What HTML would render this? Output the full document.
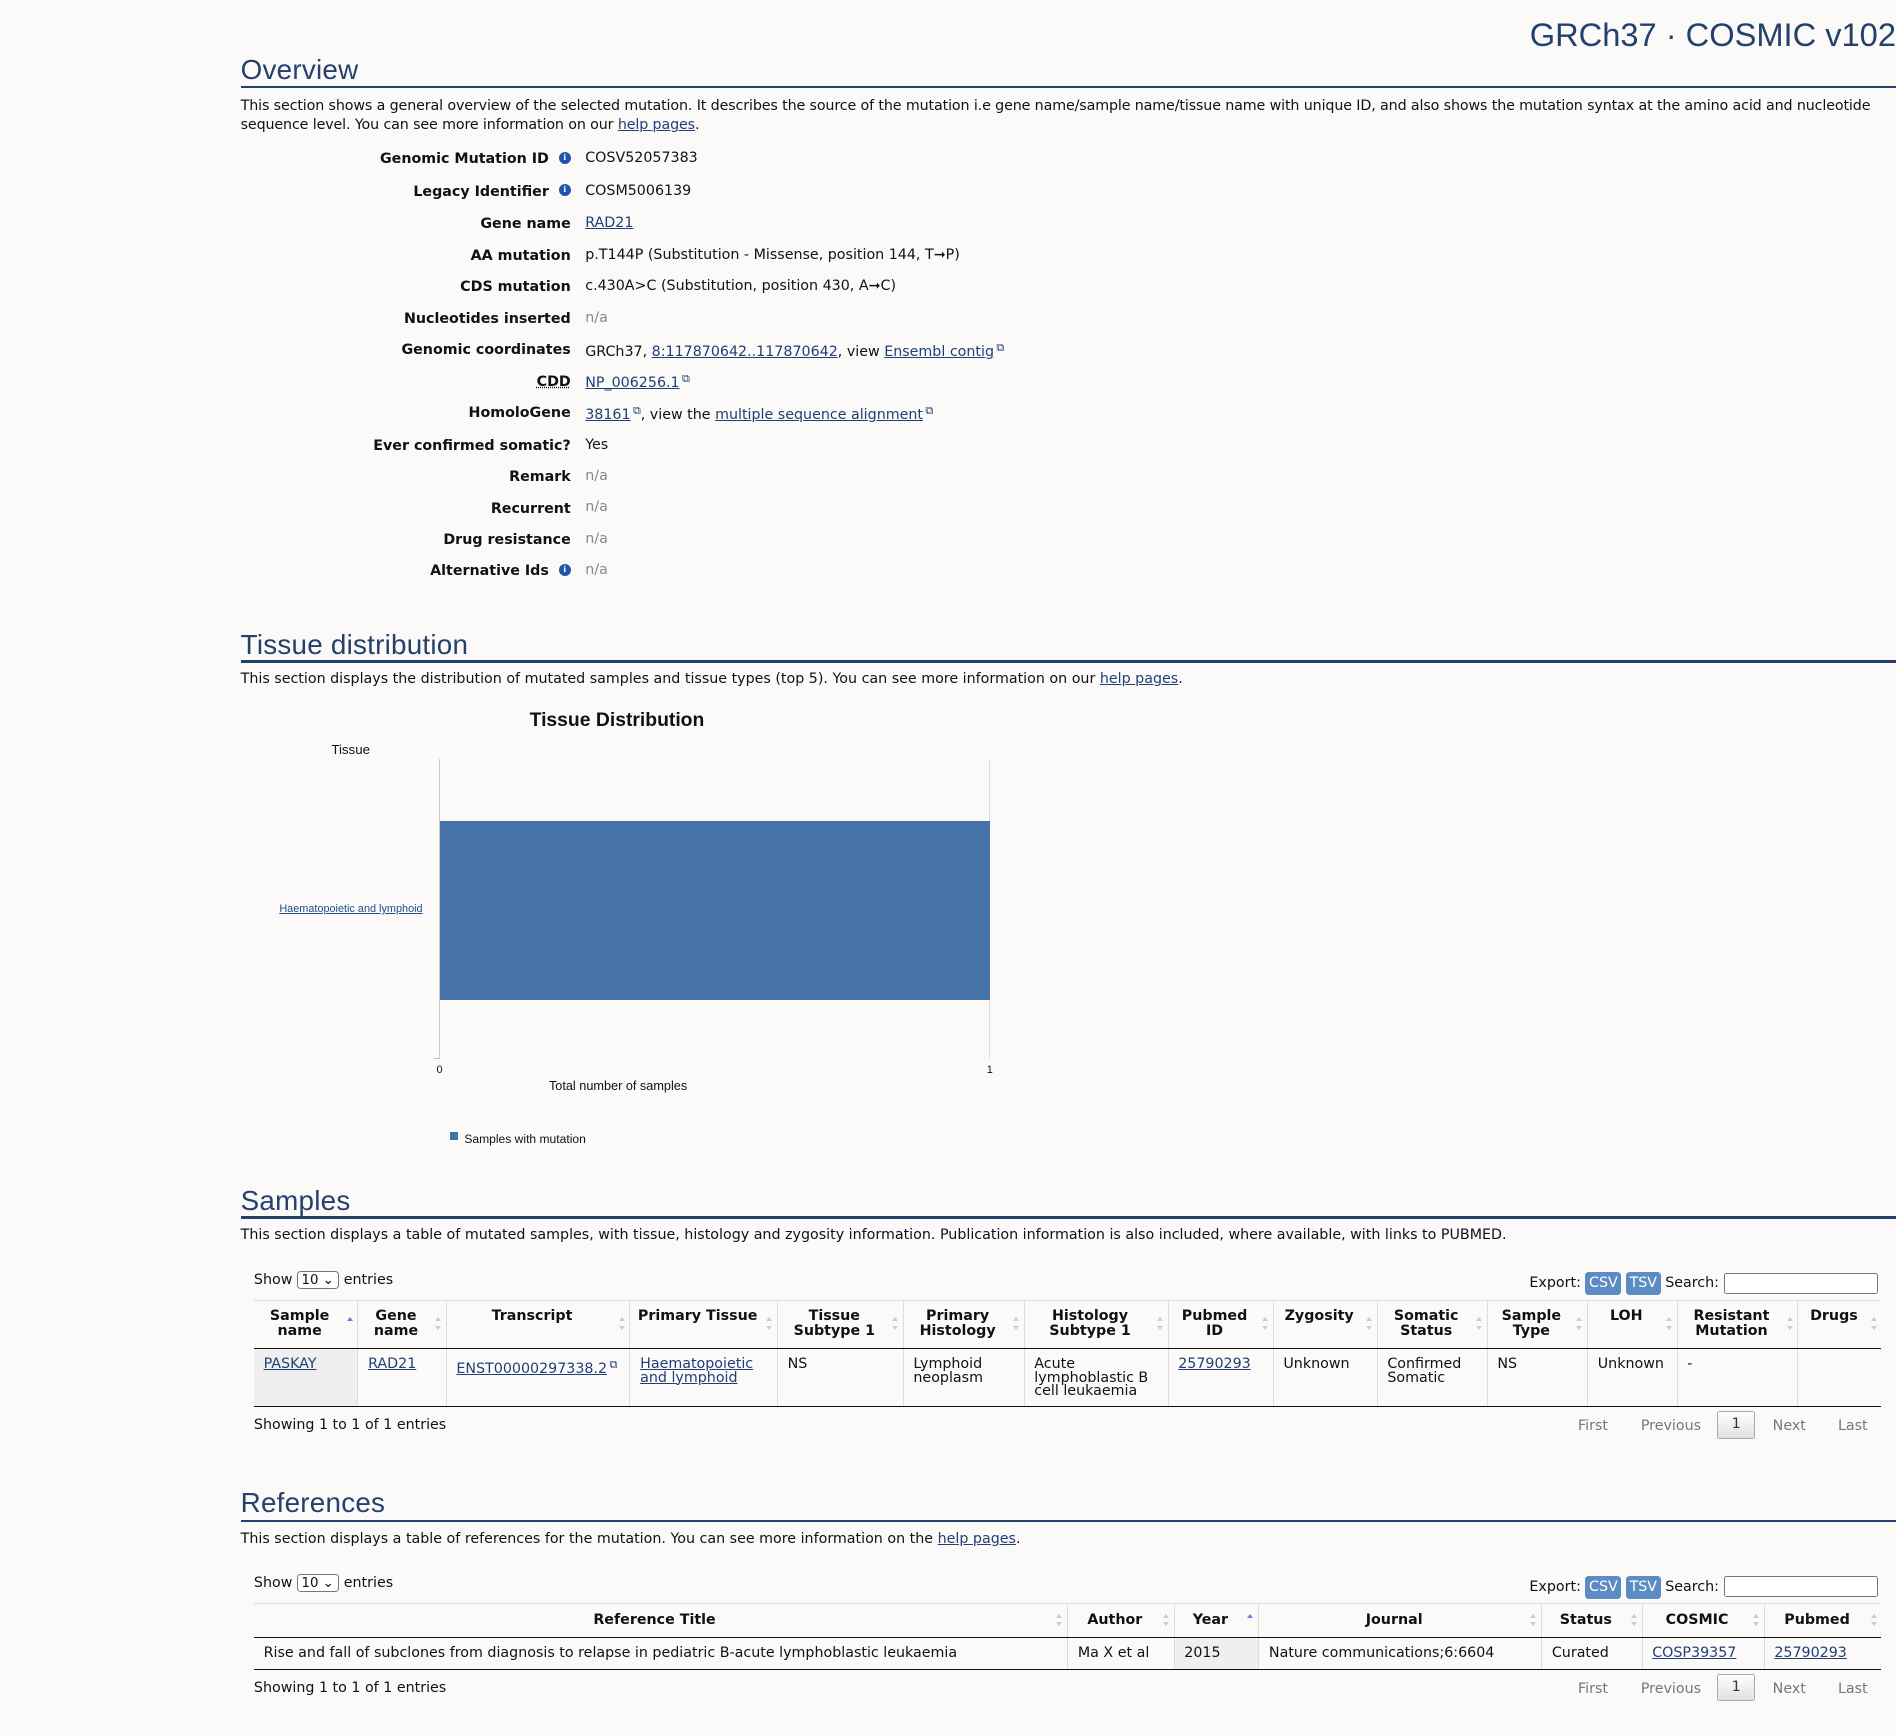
<!DOCTYPE html>
<html><head><meta charset="utf-8"><style>
html,body{margin:0;padding:0;background:#fbfaf9;}
#w{position:relative;width:1568px;height:1436px;zoom:1.20918;font-family:"DejaVu Sans","Liberation Sans",sans-serif;font-size:11.8px;color:#111;overflow:hidden;}
.a{position:absolute;white-space:nowrap;}
a{color:#1f3f75;text-decoration:underline;}
h2{position:absolute;margin:0;left:199px;font-family:"Liberation Sans",sans-serif;font-weight:normal;font-size:23px;color:#24406c;letter-spacing:0.2px;}
.hr{position:absolute;left:199px;width:1369px;height:2px;background:#24406c;}
.lab{position:absolute;right:1096px;font-weight:bold;text-align:right;white-space:nowrap;}
.val{position:absolute;left:484px;white-space:nowrap;}
.na{color:#888;}
.i{display:inline-block;width:10px;height:10px;border-radius:50%;background:#1d55a8;color:#fff;font-size:8px;line-height:10px;text-align:center;font-weight:bold;vertical-align:3px;margin-left:4px;font-family:"Liberation Serif",serif;}
.ext{font-size:9px;color:#1f3f75;vertical-align:4px;margin-left:2px;}
table{position:absolute;border-collapse:collapse;table-layout:fixed;font-size:11.8px;}
th{font-weight:bold;border-right:1px solid #ddd;border-top:1px solid #ddd;border-bottom:1px solid #111;line-height:12px;padding:7px 14px 5px 4px;position:relative;vertical-align:top;}
th:after{content:"";position:absolute;right:4px;top:50%;margin-top:-6px;width:0;height:0;border-left:3px solid transparent;border-right:3px solid transparent;border-bottom:4px solid #ccc;}
th:before{content:"";position:absolute;right:4px;top:50%;margin-top:1px;width:0;height:0;border-left:3px solid transparent;border-right:3px solid transparent;border-top:4px solid #ccc;}
th.s:after{border-bottom-color:#7b7bd6;}th.s:before{display:none;}
td{border-right:1px solid #ddd;border-bottom:1px solid #111;vertical-align:top;padding:7px 8px 5px;line-height:11.5px;}
td:last-child,th:last-child{border-right:none;}
.sel{display:inline-block;border:1px solid #777;border-radius:3px;width:35px;height:15px;font-size:11px;line-height:15px;padding-left:3px;vertical-align:middle;background:#fff;position:relative;box-sizing:border-box;}
.btn{display:inline-block;background:#5d8cc4;color:#fff;border-radius:3px;padding:1px 3px;font-size:11.8px;line-height:17px;}
.inp{display:inline-block;width:126px;height:16px;border:1px solid #777;border-radius:2px;background:#fff;vertical-align:middle;}
.pg{position:absolute;color:#777;}
.pbox{position:absolute;width:30px;height:21px;border:1px solid #aaa;background:linear-gradient(#fff,#e0e0e0);border-radius:2px;text-align:center;line-height:21px;color:#333;}
</style></head><body><div id="w">
<div class="a" style="right:0;top:13px;font-family:'Liberation Sans',sans-serif;font-size:27px;color:#24406c;">GRCh37 · COSMIC v102</div>

<h2 style="top:45px">Overview</h2><div class="hr" style="top:71px"></div>
<div class="a" style="left:199px;top:80px;line-height:16px;white-space:normal;width:1362px;letter-spacing:-0.1px">This section shows a general overview of the selected mutation. It describes the source of the mutation i.e gene name/sample name/tissue name with unique ID, and also shows the mutation syntax at the amino acid and nucleotide sequence level. You can see more information on our <a>help pages</a>.</div>

<div class="lab" style="top:125px">Genomic Mutation ID <span class="i">i</span></div><div class="val" style="top:124px">COSV52057383</div>
<div class="lab" style="top:152px">Legacy Identifier <span class="i">i</span></div><div class="val" style="top:151px">COSM5006139</div>
<div class="lab" style="top:179px;right:1096px">Gene name</div><div class="val" style="top:178px"><a>RAD21</a></div>
<div class="lab" style="top:205px">AA mutation</div><div class="val" style="top:204px">p.T144P (Substitution - Missense, position 144, T➞P)</div>
<div class="lab" style="top:231px">CDS mutation</div><div class="val" style="top:230px">c.430A&gt;C (Substitution, position 430, A➞C)</div>
<div class="lab" style="top:257px">Nucleotides inserted</div><div class="val na" style="top:256px">n/a</div>
<div class="lab" style="top:283px">Genomic coordinates</div><div class="val" style="top:282px">GRCh37, <a>8:117870642..117870642</a>, view <a>Ensembl contig</a><span class="ext">⧉</span></div>
<div class="lab" style="top:309px;text-decoration:underline dotted">CDD</div><div class="val" style="top:308px"><a>NP_006256.1</a><span class="ext">⧉</span></div>
<div class="lab" style="top:335px">HomoloGene</div><div class="val" style="top:334px"><a>38161</a><span class="ext">⧉</span>, view the <a>multiple sequence alignment</a><span class="ext">⧉</span></div>
<div class="lab" style="top:362px">Ever confirmed somatic?</div><div class="val" style="top:361px">Yes</div>
<div class="lab" style="top:388px">Remark</div><div class="val na" style="top:387px">n/a</div>
<div class="lab" style="top:414px">Recurrent</div><div class="val na" style="top:413px">n/a</div>
<div class="lab" style="top:440px">Drug resistance</div><div class="val na" style="top:439px">n/a</div>
<div class="lab" style="top:466px">Alternative Ids <span class="i">i</span></div><div class="val na" style="top:465px">n/a</div>

<h2 style="top:520px">Tissue distribution</h2><div class="hr" style="top:546px"></div>
<div class="a" style="left:199px;top:555px">This section displays the distribution of mutated samples and tissue types (top 5). You can see more information on our <a>help pages</a>.</div>

<div class="a" style="left:438px;top:586px;font-family:'Liberation Sans',sans-serif;font-weight:bold;font-size:16px">Tissue Distribution</div>
<div class="a" style="left:274px;top:614px;font-family:'Liberation Sans',sans-serif;font-size:11px">Tissue</div>
<div class="a" style="left:363px;top:628px;width:1px;height:247px;background:#ccc"></div>
<div class="a" style="left:818px;top:628px;width:1px;height:247px;background:#ddd"></div>
<div class="a" style="left:359px;top:875px;width:5px;height:1px;background:#bbb"></div>
<div class="a" style="left:364px;top:679px;width:455px;height:148px;background:#4572a7"></div>
<div class="a" style="left:231px;top:747px;font-family:'Liberation Sans',sans-serif;font-size:9px"><a style="color:#1f4e8c">Haematopoietic and lymphoid</a></div>
<div class="a" style="left:361px;top:880px;font-family:'Liberation Sans',sans-serif;font-size:9px">0</div>
<div class="a" style="left:816px;top:880px;font-family:'Liberation Sans',sans-serif;font-size:9px">1</div>
<div class="a" style="left:454px;top:892px;font-family:'Liberation Sans',sans-serif;font-size:10.5px">Total number of samples</div>
<div class="a" style="left:372px;top:936px;width:7px;height:7px;background:#4572a7"></div>
<div class="a" style="left:384px;top:936px;font-family:'Liberation Sans',sans-serif;font-size:10px">Samples with mutation</div>

<h2 style="top:980px">Samples</h2><div class="hr" style="top:1006px"></div>
<div class="a" style="left:199px;top:1015px">This section displays a table of mutated samples, with tissue, histology and zygosity information. Publication information is also included, where available, with links to PUBMED.</div>
<div class="a" style="left:210px;top:1051px">Show <span class="sel">10 ⌄</span> entries</div>
<div class="a" style="right:15px;top:1052px">Export: <span class="btn">CSV</span> <span class="btn">TSV</span> Search: <span class="inp"></span></div>
<table style="left:210px;top:1075px;width:1346px">
<colgroup><col style="width:86px"><col style="width:73px"><col style="width:152px"><col style="width:122px"><col style="width:104px"><col style="width:100px"><col style="width:119px"><col style="width:87px"><col style="width:86px"><col style="width:91px"><col style="width:83px"><col style="width:74px"><col style="width:100px"><col style="width:69px"></colgroup>
<tr style="height:40px"><th class="s">Sample name</th><th>Gene name</th><th>Transcript</th><th>Primary Tissue</th><th>Tissue Subtype 1</th><th>Primary Histology</th><th>Histology Subtype 1</th><th>Pubmed ID</th><th>Zygosity</th><th>Somatic Status</th><th>Sample Type</th><th>LOH</th><th>Resistant Mutation</th><th>Drugs</th></tr>
<tr style="height:48px"><td style="background:#efefef"><a>PASKAY</a></td><td><a>RAD21</a></td><td><a>ENST00000297338.2</a><span class="ext">⧉</span></td><td><a>Haematopoietic and lymphoid</a></td><td>NS</td><td>Lymphoid neoplasm</td><td>Acute lymphoblastic B cell leukaemia</td><td><a>25790293</a></td><td>Unknown</td><td>Confirmed Somatic</td><td>NS</td><td>Unknown</td><td>-</td><td></td></tr>
</table>
<div class="a" style="left:210px;top:1172px">Showing 1 to 1 of 1 entries</div>
<div class="pg" style="left:1305px;top:1173px">First</div><div class="pg" style="left:1357px;top:1173px">Previous</div><div class="pbox" style="left:1420px;top:1167px">1</div><div class="pg" style="left:1466px;top:1173px">Next</div><div class="pg" style="left:1520px;top:1173px">Last</div>

<h2 style="top:1230px">References</h2><div class="hr" style="top:1257px"></div>
<div class="a" style="left:199px;top:1266px">This section displays a table of references for the mutation. You can see more information on the <a>help pages</a>.</div>
<div class="a" style="left:210px;top:1302px">Show <span class="sel">10 ⌄</span> entries</div>
<div class="a" style="right:15px;top:1303px">Export: <span class="btn">CSV</span> <span class="btn">TSV</span> Search: <span class="inp"></span></div>
<table style="left:210px;top:1326px;width:1346px">
<colgroup><col style="width:673px"><col style="width:88px"><col style="width:70px"><col style="width:234px"><col style="width:83px"><col style="width:101px"><col style="width:97px"></colgroup>
<tr style="height:28px"><th>Reference Title</th><th>Author</th><th class="s">Year</th><th>Journal</th><th>Status</th><th>COSMIC</th><th>Pubmed</th></tr>
<tr style="height:26px"><td>Rise and fall of subclones from diagnosis to relapse in pediatric B-acute lymphoblastic leukaemia</td><td>Ma X et al</td><td style="background:#efefef">2015</td><td>Nature communications;6:6604</td><td>Curated</td><td><a>COSP39357</a></td><td><a>25790293</a></td></tr>
</table>
<div class="a" style="left:210px;top:1389px">Showing 1 to 1 of 1 entries</div>
<div class="pg" style="left:1305px;top:1390px">First</div><div class="pg" style="left:1357px;top:1390px">Previous</div><div class="pbox" style="left:1420px;top:1384px">1</div><div class="pg" style="left:1466px;top:1390px">Next</div><div class="pg" style="left:1520px;top:1390px">Last</div>
</div></body></html>
